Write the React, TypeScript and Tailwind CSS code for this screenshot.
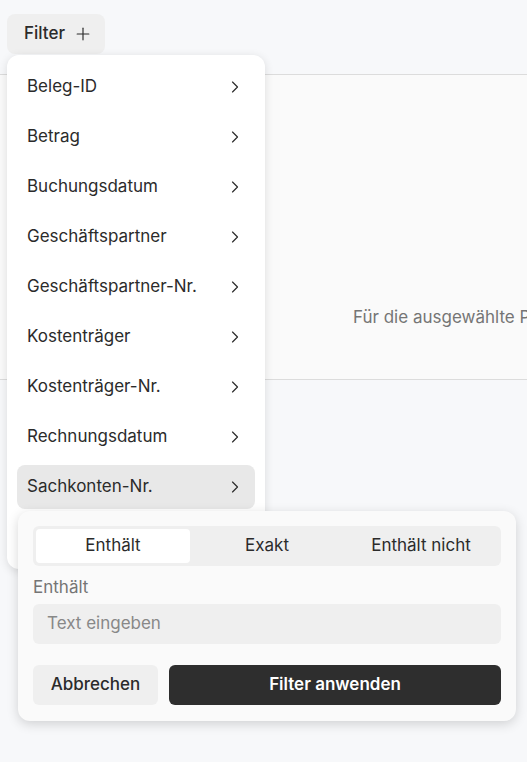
import { ChevronRight, Plus } from "lucide-react";

const fields = [
  "Beleg-ID",
  "Betrag",
  "Buchungsdatum",
  "Geschäftspartner",
  "Geschäftspartner-Nr.",
  "Kostenträger",
  "Kostenträger-Nr.",
  "Rechnungsdatum",
  "Sachkonten-Nr.",
  "Steuerschlüssel",
];

const modes = ["Enthält", "Exakt", "Enthält nicht"];

export default function App() {
  const active = "Sachkonten-Nr.";

  return (
    <div
      className="relative h-[762px] w-[527px] overflow-hidden bg-[#f7f8fa] text-[#2b2b2b]"
      style={{ fontFamily: "Inter, 'Noto Sans', sans-serif" }}
    >
      {/* Toolbar */}
      <div className="flex h-[74px] items-start px-[7px] pt-[14px]">
        <button className="flex h-10 items-center gap-2 rounded-lg bg-[#efefef] pl-[17px] pr-[12px] text-[17px] font-medium">
          Filter
          <Plus size={20} strokeWidth={1.4} />
        </button>
      </div>

      {/* Empty state panel */}
      <div className="h-[306px] w-[1100px] border-y border-[#dcdcdc] bg-[#fafafa] pl-[353px] pt-[230px]">
        <p className="whitespace-nowrap text-[17px] text-[#757575]">
          Für die ausgewählte Periode liegen keine Daten vor.
        </p>
      </div>

      {/* Field menu */}
      <div className="absolute left-[7px] top-[55px] flex w-[258px] flex-col gap-1.5 rounded-xl bg-white p-2.5 shadow-[0_2px_10px_rgba(0,0,0,0.12)]">
        {fields.map((f) => (
          <div
            key={f}
            className={`flex h-11 items-center justify-between rounded-lg pl-[10px] pr-[10px] text-[17px] ${
              f === active ? "bg-[#e8e8e8]" : ""
            }`}
          >
            <span>{f}</span>
            <ChevronRight size={20} strokeWidth={1.4} />
          </div>
        ))}
      </div>

      {/* Condition popover */}
      <div className="absolute left-[18px] top-[511px] flex w-[498px] flex-col rounded-xl bg-[#fafafa] px-[15px] pb-[16px] pt-[15px] shadow-[0_3px_12px_rgba(0,0,0,0.16)]">
        <div className="grid h-10 grid-cols-3 rounded-md bg-[#efefef] p-[3px]">
          {modes.map((m, i) => (
            <div
              key={m}
              className={`flex items-center justify-center rounded text-[17px] ${
                i === 0 ? "bg-white" : ""
              }`}
            >
              {m}
            </div>
          ))}
        </div>
        <label className="mt-[9px] text-[17px] leading-6 text-[#757575]">Enthält</label>
        <div className="mt-[5px] flex h-10 items-center rounded-md bg-[#efefef] px-[14px] text-[17px] text-[#888]">
          Text eingeben
        </div>
        <div className="mt-[21px] flex gap-[11px]">
          <button className="h-10 w-[125px] rounded-md bg-[#efefef] text-[17px] font-medium">
            Abbrechen
          </button>
          <button className="h-10 flex-1 rounded-md bg-[#2e2e2e] text-[17px] font-semibold text-white">
            Filter anwenden
          </button>
        </div>
      </div>
    </div>
  );
}
